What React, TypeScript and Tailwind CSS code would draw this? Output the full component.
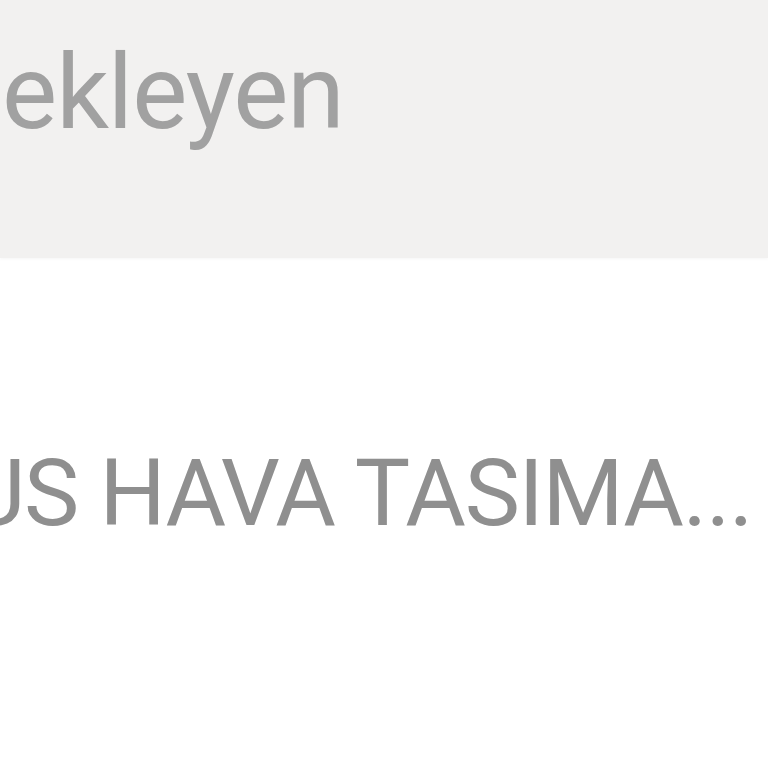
export default function App() {
  return (
    <div className="w-[768px] h-[768px] overflow-hidden bg-white" style={{ fontFamily: "Roboto, 'Noto Sans', sans-serif" }}>
      <div className="h-[258px] bg-[#f2f1f0] shadow-[0_1px_3px_rgba(0,0,0,0.04)] overflow-hidden">
        <div className="pt-[18px] pl-[2px] text-[104px] leading-[150px] tracking-[-1px] text-[#a1a1a1] whitespace-nowrap">ekleyen</div>
      </div>
      <div className="pt-[176px] overflow-hidden">
        <div className="-ml-[115px] text-[93px] leading-[120px] tracking-[-1.3px] text-[#8f8f8f] whitespace-nowrap">MUS HAVA TASIMA...</div>
      </div>
    </div>
  );
}
